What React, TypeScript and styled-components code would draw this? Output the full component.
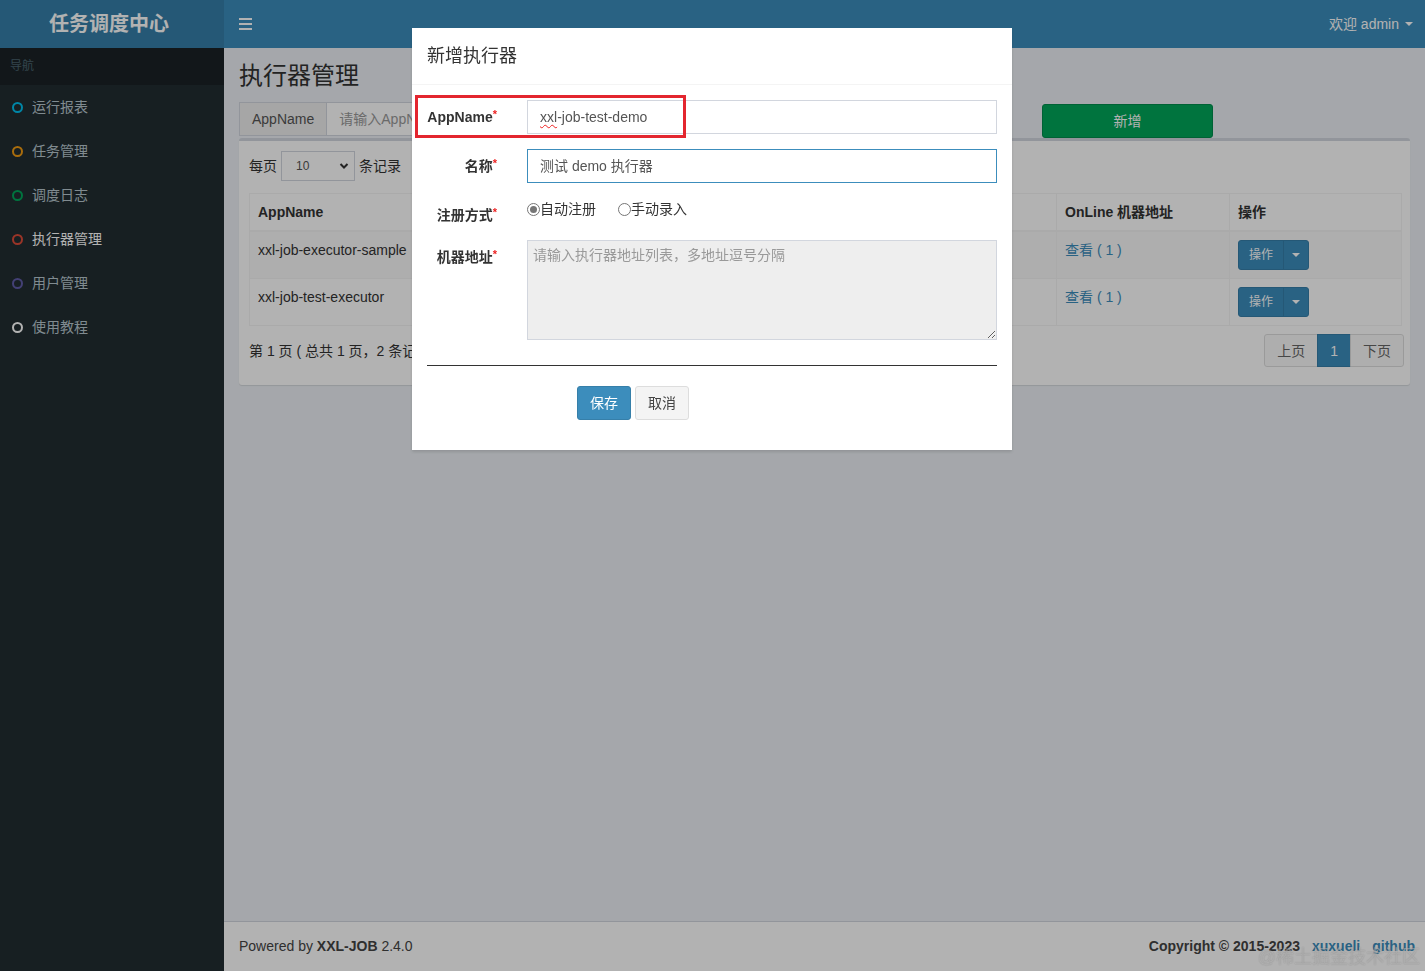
import React from "react";
import styled, { createGlobalStyle } from "styled-components";

const GlobalStyle = createGlobalStyle`
  html, body { margin: 0; padding: 0; height: 100%; }
  body {
    font-family: "Liberation Sans", "Noto Sans CJK SC", sans-serif;
    font-size: 14px;
    line-height: 20px;
    color: #333;
    overflow: hidden;
  }
  * { box-sizing: border-box; }
`;

const Wrapper = styled.div`
  display: grid;
  grid-template-columns: 224px 1fr;
  grid-template-rows: 48px 1fr 50px;
  height: 100vh;
  background: #ecf0f5;
`;

const Logo = styled.div`
  background: #367fa9;
  color: #fff;
  font-size: 20px;
  font-weight: 700;
  display: flex;
  align-items: center;
  justify-content: center;
  padding-right: 6px;
`;

const Navbar = styled.div`
  background: #3c8dbc;
  color: #fff;
  display: flex;
  align-items: center;
  justify-content: space-between;
  padding: 0 12px 0 15px;
`;

const UserMenu = styled.div`
  display: flex;
  align-items: center;
  gap: 6px;
`;

const Caret = styled.span<{ $color?: string }>`
  display: inline-block;
  width: 0;
  height: 0;
  border-top: 4px solid ${p => p.$color || "#fff"};
  border-left: 4px solid transparent;
  border-right: 4px solid transparent;
`;

const Sidebar = styled.aside`
  grid-row: 2 / 4;
  background: #222d32;
`;

const SidebarHeader = styled.div`
  background: #1a2226;
  color: #4b646f;
  font-size: 12px;
  height: 37px;
  line-height: 36px;
  padding-left: 10px;
`;

const MenuItem = styled.div<{ $active?: boolean }>`
  height: 44px;
  display: flex;
  align-items: center;
  gap: 9px;
  padding-left: 12px;
  color: ${p => (p.$active ? "#fff" : "#b8c7ce")};
`;

const Ring = styled.span<{ $color: string }>`
  width: 11px;
  height: 11px;
  border-radius: 50%;
  border: 2px solid ${p => p.$color};
`;

const Content = styled.main`
  padding: 15px 15px 0;
  overflow: hidden;
`;

const PageTitle = styled.h1`
  margin: 0 0 13px;
  font-size: 24px;
  line-height: 26px;
  font-weight: 400;
  color: #333;
`;

const FilterRow = styled.div`
  display: grid;
  grid-template-columns: 270px 270px 173px 171px 1fr;
  column-gap: 30px;
  height: 34px;
  margin-bottom: 2px;
`;

const InputGroup = styled.div`
  display: flex;
  height: 34px;
`;

const Addon = styled.span`
  background: #eee;
  border: 1px solid #d2d6de;
  padding: 6px 12px;
  color: #555;
  white-space: nowrap;
`;

const GroupInput = styled.div`
  flex: 1;
  background: #fff;
  border: 1px solid #d2d6de;
  border-left: none;
  padding: 6px 12px;
  color: #999;
  white-space: nowrap;
  overflow: hidden;
`;

const BlockButton = styled.div<{ $bg: string; $border: string }>`
  height: 34px;
  border-radius: 3px;
  background: ${p => p.$bg};
  border: 1px solid ${p => p.$border};
  color: #fff;
  display: flex;
  align-items: center;
  justify-content: center;
  margin-top: 2px;
`;

const Box = styled.section`
  background: #fff;
  border-top: 3px solid #d2d6de;
  border-radius: 3px;
  box-shadow: 0 1px 1px rgba(0, 0, 0, 0.1);
  padding: 10px 10px 0;
`;

const LengthRow = styled.div`
  display: flex;
  align-items: center;
  gap: 4px;
  margin-bottom: 12px;
`;

const SelectBox = styled.div`
  width: 74px;
  height: 30px;
  border: 1px solid #d2d6de;
  background: #fff;
  display: flex;
  align-items: center;
  justify-content: space-between;
  padding: 0 5px 0 14px;
  font-size: 12px;
  color: #555;
`;

const Table = styled.table`
  width: 100%;
  border-collapse: collapse;
  table-layout: fixed;
  border: 1px solid #f4f4f4;
  th, td {
    padding: 8px;
    border: 1px solid #f4f4f4;
    text-align: left;
    vertical-align: top;
    white-space: nowrap;
    overflow: hidden;
  }
  th {
    font-weight: 700;
    border-bottom: 2px solid #f4f4f4;
  }
  tbody tr:nth-child(odd) {
    background: #f9f9f9;
  }
`;

const Link = styled.a`
  color: #3c8dbc;
  text-decoration: none;
`;

const FooterLink = styled(Link)`
  margin-left: 12px;
`;

const SplitButton = styled.div`
  display: inline-flex;
  height: 30px;
  border-radius: 3px;
  background: #3c8dbc;
  border: 1px solid #367fa9;
  color: #fff;
  font-size: 12px;
  overflow: hidden;
`;

const SplitMain = styled.span`
  padding: 0 10px;
  display: flex;
  align-items: center;
`;

const SplitToggle = styled.span`
  width: 25px;
  display: flex;
  align-items: center;
  justify-content: center;
  border-left: 1px solid #367fa9;
`;

const PagingRow = styled.div`
  display: flex;
  align-items: center;
  justify-content: space-between;
  padding: 8px 0 18px;
`;

const Pager = styled.div`
  display: flex;
  margin-right: -4px;
`;

const PageItem = styled.span<{ $active?: boolean }>`
  height: 33px;
  padding: 0 12px;
  display: flex;
  align-items: center;
  border: 1px solid ${p => (p.$active ? "#367fa9" : "#ddd")};
  margin-left: -1px;
  background: ${p => (p.$active ? "#3c8dbc" : "#fafafa")};
  color: ${p => (p.$active ? "#fff" : "#666")};
  &:first-child { border-radius: 3px 0 0 3px; }
  &:last-child { border-radius: 0 3px 3px 0; }
`;

const Footer = styled.footer`
  grid-column: 2;
  background: #fff;
  border-top: 1px solid #d2d6de;
  padding: 14px 10px 15px 15px;
  display: flex;
  justify-content: space-between;
  color: #444;
`;

const Backdrop = styled.div`
  position: fixed;
  inset: 0;
  background: rgba(0, 0, 0, 0.3);
  display: flex;
  justify-content: center;
  align-items: flex-start;
  padding: 28px 1px 0 0;
`;

const Modal = styled.div`
  width: 600px;
  background: #fff;
  position: relative;
  box-shadow: 0 2px 3px rgba(0, 0, 0, 0.125);
`;

const ModalHeader = styled.div`
  padding: 15px;
  border-bottom: 1px solid #f4f4f4;
`;

const ModalTitle = styled.h4`
  margin: 0;
  font-size: 18px;
  line-height: 26px;
  font-weight: 400;
  color: #333;
`;

const ModalBody = styled.div`
  padding: 15px;
`;

const FormGroup = styled.div`
  display: grid;
  grid-template-columns: 100px 1fr;
  margin: 0 -15px 15px;
  & > * { padding: 0 15px; }
`;

const Label = styled.label`
  text-align: right;
  font-weight: 700;
  padding-top: 7px;
  color: #333;
  white-space: nowrap;
`;

const Required = styled.span`
  color: #e22;
  font-size: 11px;
  vertical-align: top;
  line-height: 14px;
`;

const Field = styled.div``;

const TextInput = styled.div<{ $focus?: boolean }>`
  height: 34px;
  border: 1px solid ${p => (p.$focus ? "#3c8dbc" : "#d2d6de")};
  padding: 6px 12px;
  color: #555;
  background: #fff;
`;

const Misspelled = styled.span`
  text-decoration: underline wavy #e22;
  text-underline-offset: 2px;
  text-decoration-thickness: 1px;
`;

const RadioRow = styled.div`
  display: flex;
  gap: 22px;
  height: 27px;
  padding-top: 1px;
  color: #333;
`;

const RadioLabel = styled.span`
  display: flex;
  align-items: center;
  height: 20px;
`;

const RadioDot = styled.span<{ $checked?: boolean }>`
  width: 13px;
  height: 13px;
  border-radius: 50%;
  border: 1px solid #767676;
  background: #fff;
  display: flex;
  align-items: center;
  justify-content: center;
  &::after {
    content: "";
    width: 7px;
    height: 7px;
    border-radius: 50%;
    background: ${p => (p.$checked ? "#767676" : "transparent")};
  }
`;

const TextArea = styled.textarea`
  display: block;
  width: 100%;
  height: 100px;
  background: #eee;
  border: 1px solid #d2d6de;
  padding: 4px 5px;
  font: inherit;
  resize: vertical;
  outline: none;
  &::placeholder { color: #999; }
`;

const Divider = styled.hr`
  border: 0;
  border-top: 1px solid #333;
  margin: 25px 0 20px;
`;

const ButtonRow = styled.div`
  display: flex;
  gap: 4px;
  margin: 0 0 15px 150px;
`;

const Button = styled.button<{ $primary?: boolean }>`
  height: 34px;
  padding: 0 12px;
  font: inherit;
  border-radius: 3px;
  border: 1px solid ${p => (p.$primary ? "#367fa9" : "#ddd")};
  background: ${p => (p.$primary ? "#3c8dbc" : "#f4f4f4")};
  color: ${p => (p.$primary ? "#fff" : "#444")};
`;

const Annotation = styled.div`
  position: absolute;
  left: 3px;
  top: 67px;
  width: 271px;
  height: 43px;
  border: 3px solid #e3262f;
  pointer-events: none;
`;

const Watermark = styled.div`
  position: fixed;
  right: 5px;
  bottom: 4px;
  font-size: 18px;
  color: rgba(255, 255, 255, 0.35);
  text-shadow: 0 0 1px rgba(60, 60, 60, 0.5);
  pointer-events: none;
`;

const menu = [
  { name: "运行报表", color: "#00c0ef" },
  { name: "任务管理", color: "#f39c12" },
  { name: "调度日志", color: "#00a65a" },
  { name: "执行器管理", color: "#dd4b39", active: true },
  { name: "用户管理", color: "#605ca8" },
  { name: "使用教程", color: "#fff" },
];

const rows = [
  { app: "xxl-job-executor-sample", title: "示例执行器", type: "自动注册" },
  { app: "xxl-job-test-executor", title: "测试执行器", type: "自动注册" },
];

const Bars = () => (
  <svg width="14" height="12" viewBox="0 0 14 12" fill="#fff">
    <rect x="0" y="0" width="13" height="2" />
    <rect x="0" y="5" width="13" height="2" />
    <rect x="0" y="10" width="13" height="2" />
  </svg>
);

const Chevron = () => (
  <svg width="10" height="8" viewBox="0 0 10 8">
    <path d="M1.5 2 L5 5.5 L8.5 2" fill="none" stroke="#333" strokeWidth="2" />
  </svg>
);

export default function App() {
  return (
    <>
      <GlobalStyle />
      <Wrapper>
        <Logo>任务调度中心</Logo>
        <Navbar>
          <Bars />
          <UserMenu>
            欢迎 admin <Caret />
          </UserMenu>
        </Navbar>
        <Sidebar>
          <SidebarHeader>导航</SidebarHeader>
          {menu.map(m => (
            <MenuItem key={m.name} $active={m.active}>
              <Ring $color={m.color} />
              {m.name}
            </MenuItem>
          ))}
        </Sidebar>
        <Content>
          <PageTitle>执行器管理</PageTitle>
          <FilterRow>
            <InputGroup>
              <Addon>AppName</Addon>
              <GroupInput>请输入AppName</GroupInput>
            </InputGroup>
            <InputGroup>
              <Addon>名称</Addon>
              <GroupInput>请输入名称</GroupInput>
            </InputGroup>
            <BlockButton $bg="#3c8dbc" $border="#367fa9">搜索</BlockButton>
            <BlockButton $bg="#00a65a" $border="#008d4c">新增</BlockButton>
          </FilterRow>
          <Box>
            <LengthRow>
              每页
              <SelectBox>
                10 <Chevron />
              </SelectBox>
              条记录
            </LengthRow>
            <Table>
              <colgroup>
                <col style={{ width: 172 }} />
                <col style={{ width: 463 }} />
                <col style={{ width: 172 }} />
                <col style={{ width: 173 }} />
                <col style={{ width: 172 }} />
              </colgroup>
              <thead>
                <tr>
                  <th>AppName</th>
                  <th>名称</th>
                  <th>注册方式</th>
                  <th>OnLine 机器地址</th>
                  <th>操作</th>
                </tr>
              </thead>
              <tbody>
                {rows.map(r => (
                  <tr key={r.app}>
                    <td>{r.app}</td>
                    <td>{r.title}</td>
                    <td>{r.type}</td>
                    <td>
                      <Link>查看 ( 1 )</Link>
                    </td>
                    <td>
                      <SplitButton>
                        <SplitMain>操作</SplitMain>
                        <SplitToggle>
                          <Caret />
                        </SplitToggle>
                      </SplitButton>
                    </td>
                  </tr>
                ))}
              </tbody>
            </Table>
            <PagingRow>
              <span>第 1 页 ( 总共 1 页，2 条记录 )</span>
              <Pager>
                <PageItem>上页</PageItem>
                <PageItem $active>1</PageItem>
                <PageItem>下页</PageItem>
              </Pager>
            </PagingRow>
          </Box>
        </Content>
        <Footer>
          <span>
            Powered by <b>XXL-JOB</b> 2.4.0
          </span>
          <b>
            Copyright © 2015-2023
            <FooterLink>xuxueli</FooterLink>
            <FooterLink>github</FooterLink>
          </b>
        </Footer>
      </Wrapper>

      <Backdrop>
        <Modal>
          <ModalHeader>
            <ModalTitle>新增执行器</ModalTitle>
          </ModalHeader>
          <ModalBody>
            <FormGroup>
              <Label>
                AppName<Required>*</Required>
              </Label>
              <Field>
                <TextInput>
                  <Misspelled>xxl</Misspelled>-job-test-demo
                </TextInput>
              </Field>
            </FormGroup>
            <FormGroup>
              <Label>
                名称<Required>*</Required>
              </Label>
              <Field>
                <TextInput $focus>测试 demo 执行器</TextInput>
              </Field>
            </FormGroup>
            <FormGroup>
              <Label>
                注册方式<Required>*</Required>
              </Label>
              <RadioRow>
                <RadioLabel>
                  <RadioDot $checked />
                  自动注册
                </RadioLabel>
                <RadioLabel>
                  <RadioDot />
                  手动录入
                </RadioLabel>
              </RadioRow>
            </FormGroup>
            <FormGroup>
              <Label>
                机器地址<Required>*</Required>
              </Label>
              <Field>
                <TextArea readOnly placeholder="请输入执行器地址列表，多地址逗号分隔" />
              </Field>
            </FormGroup>
            <Divider />
            <ButtonRow>
              <Button $primary>保存</Button>
              <Button>取消</Button>
            </ButtonRow>
          </ModalBody>
          <Annotation />
        </Modal>
      </Backdrop>
      <Watermark>@稀土掘金技术社区</Watermark>
    </>
  );
}
